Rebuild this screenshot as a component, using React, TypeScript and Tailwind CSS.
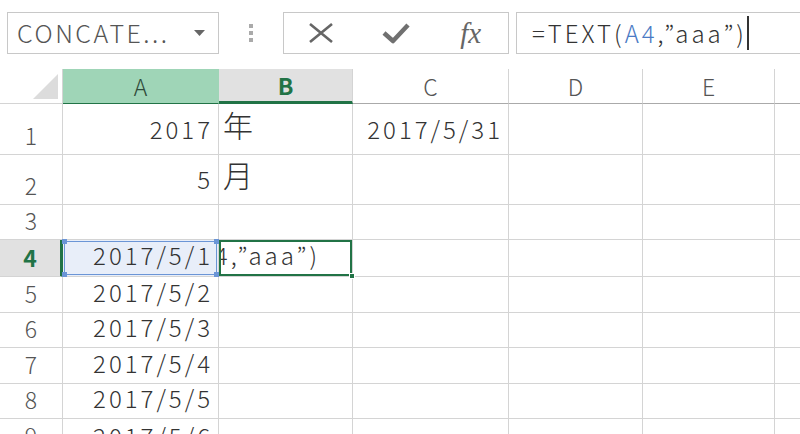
import React from 'react';

const FONT = { fontFamily: '"Noto Sans CJK JP", "Noto Sans", sans-serif' };

type Cell = { text?: string; align?: 'left' | 'right' };
type Row = { num: string; h: string; pb: string; cells: Cell[] };

const rows: Row[] = [
  { num: '1', h: 'h-[51px]', pb: 'pb-[7px]', cells: [{ text: '2017', align: 'right' }, { text: '年', align: 'left' }, { text: '2017/5/31', align: 'right' }, {}, {}] },
  { num: '2', h: 'h-[50px]', pb: 'pb-[7px]', cells: [{ text: '5', align: 'right' }, { text: '月', align: 'left' }, {}, {}, {}] },
  { num: '3', h: 'h-[35px]', pb: 'pb-[2px]', cells: [{}, {}, {}, {}, {}] },
  { num: '4', h: 'h-[37px]', pb: 'pb-[2px]', cells: [] },
  { num: '5', h: 'h-[36px]', pb: 'pb-[2px]', cells: [{ text: '2017/5/2', align: 'right' }, {}, {}, {}, {}] },
  { num: '6', h: 'h-[35px]', pb: 'pb-[2px]', cells: [{ text: '2017/5/3', align: 'right' }, {}, {}, {}, {}] },
  { num: '7', h: 'h-[36px]', pb: 'pb-[2px]', cells: [{ text: '2017/5/4', align: 'right' }, {}, {}, {}, {}] },
  { num: '8', h: 'h-[35px]', pb: 'pb-[2px]', cells: [{ text: '2017/5/5', align: 'right' }, {}, {}, {}, {}] },
  { num: '9', h: 'h-[36px]', pb: 'pb-0', cells: [{ text: '2017/5/6', align: 'right' }, {}, {}, {}, {}] },
];

function Corner({ className }: { className: string }) {
  return <span className={`absolute w-[5px] h-[5px] bg-[#6b95d6] ${className}`} />;
}

function Toolbar() {
  return (
    <div className="flex items-center pt-[12px]">
      {/* name box */}
      <div className="ml-[7px] w-[212px] h-[42px] border border-[#c8c8c8] flex items-center justify-between pl-[9px] pr-[13px]">
        <span className="text-[25px] font-light text-[#555] tracking-[2.5px]">CONCATE...</span>
        <svg width="11" height="6" viewBox="0 0 11 6"><path d="M0 0h11L5.5 6z" fill="#666" /></svg>
      </div>
      <div className="w-[64px] flex flex-col items-center gap-[3px]">
        <span className="w-[4px] h-[4px] bg-[#aaa]" />
        <span className="w-[4px] h-[4px] bg-[#aaa]" />
        <span className="w-[4px] h-[4px] bg-[#aaa]" />
      </div>
      <div className="w-[226px] h-[42px] border border-[#c8c8c8] grid grid-cols-3 items-center">
        <div className="flex justify-center">
          <svg width="26" height="20" viewBox="0 0 26 20">
            <path d="M2 1L24 19M24 1L2 19" stroke="#666" strokeWidth="2.6" />
          </svg>
        </div>
        <div className="flex justify-center">
          <svg width="28" height="22" viewBox="0 0 28 22">
            <path d="M2 11L11 19L26 3" stroke="#707070" strokeWidth="4.5" fill="none" strokeLinejoin="round" />
          </svg>
        </div>
        <div className="flex justify-center">
          <span className="text-[29px] italic text-[#666] leading-none" style={{ fontFamily: '"Liberation Serif", serif' }}>fx</span>
        </div>
      </div>
      <div className="ml-[7px] flex-1 h-[42px] border-y border-l border-[#c8c8c8] flex items-center pl-[15px]">
        <span className="text-[24px] font-light text-[#333] tracking-[3px] whitespace-nowrap">
          =TEXT(<span className="text-[#4a7ac4]">A4</span>,”aaa”)
        </span>
        <span className="w-[2px] h-[34px] bg-[#333]" />
      </div>
    </div>
  );
}

function ColumnHeaders() {
  const base = 'h-[35px] flex items-center justify-center text-[23px] border-b border-r';
  return (
    <>
      <div className="h-[35px] border-b border-r border-[#d4d4d4] flex items-end justify-end pr-[4px] pb-[4px]">
        <svg width="25" height="25" viewBox="0 0 25 25"><path d="M25 0V25H0z" fill="#dcdcdc" /></svg>
      </div>
      <div className={`${base} font-light bg-[#9fd5b7] border-[#9fd5b7] border-b-[#217346] text-[#2f4a3a]`}>A</div>
      <div className={`${base} bg-[#e1e1e1] border-[#d4d4d4] border-b-[3px] border-b-[#217346] font-bold text-[#217346]`}>B</div>
      <div className={`${base} font-light border-[#d4d4d4] border-b-[#aaaaaa] text-[#555]`}>C</div>
      <div className={`${base} font-light border-[#d4d4d4] border-b-[#aaaaaa] text-[#555]`}>D</div>
      <div className={`${base} font-light border-[#d4d4d4] border-b-[#aaaaaa] text-[#555]`}>E</div>
      <div className="h-[35px] border-b border-[#aaaaaa]" />
    </>
  );
}

function Row4() {
  return (
    <>
      <div className="h-[37px] bg-[#e1e1e1] border-b border-[#d4d4d4] border-r-[3px] border-r-[#217346] flex items-end justify-center pb-[2px] text-[23px] font-bold text-[#217346]">4</div>
      <div className="h-[37px] border-b border-r border-[#d4d4d4] bg-[#e8eef9] relative">
        <div className="absolute inset-[1px] border-[1.5px] border-[#6b95d6] flex items-end justify-end pr-[3px] pb-[1px] text-[24px] font-light text-[#333] tracking-[3px]">
          2017/5/1
        </div>
        <Corner className="-left-[1px] -top-[1px]" />
        <Corner className="-right-[1px] -top-[1px]" />
        <Corner className="-left-[1px] -bottom-[1px]" />
        <Corner className="-right-[1px] -bottom-[1px]" />
      </div>
      <div className="h-[37px] border-b border-r border-[#d4d4d4] relative">
        <div className="absolute inset-[0px] border-2 border-[#217346] overflow-hidden flex items-end justify-end pr-[30px] pb-[1px] text-[24px] font-light text-[#333] tracking-[3px] whitespace-nowrap">
          =TEXT(A4,”aaa”)
        </div>
        <span className="absolute -right-[3px] -bottom-[3px] w-[6px] h-[6px] bg-[#217346] border border-white" />
      </div>
      <div className="h-[37px] border-b border-r border-[#d4d4d4]" />
      <div className="h-[37px] border-b border-r border-[#d4d4d4]" />
      <div className="h-[37px] border-b border-r border-[#d4d4d4]" />
      <div className="h-[37px] border-b border-[#d4d4d4]" />
    </>
  );
}

export default function App() {
  return (
    <div className="w-[800px] h-[434px] overflow-hidden bg-white text-[#333]" style={FONT}>
      <Toolbar />
      <div className="mt-[15px] grid grid-cols-[63px_156px_134px_156px_134px_132px_1fr]">
        <ColumnHeaders />
        {rows.map((r) =>
          r.num === '4' ? (
            <Row4 key={r.num} />
          ) : (
            <React.Fragment key={r.num}>
              <div className={`${r.h} border-b border-r border-[#d4d4d4] flex items-end justify-center pb-[2px] text-[23px] font-light text-[#555]`}>{r.num}</div>
              {r.cells.map((c, i) => (
                <div
                  key={i}
                  className={`${r.h} ${r.pb} border-b border-r border-[#d4d4d4] flex items-end ${c.align === 'left' ? 'justify-start pl-[4px]' : 'justify-end pr-[5px]'} ${c.text === '年' || c.text === '月' ? 'text-[30px]' : 'text-[24px] tracking-[3px]'} font-light text-[#333] whitespace-nowrap`}
                >
                  {c.text}
                </div>
              ))}
              <div className={`${r.h} border-b border-[#d4d4d4]`} />
            </React.Fragment>
          )
        )}
      </div>
    </div>
  );
}
